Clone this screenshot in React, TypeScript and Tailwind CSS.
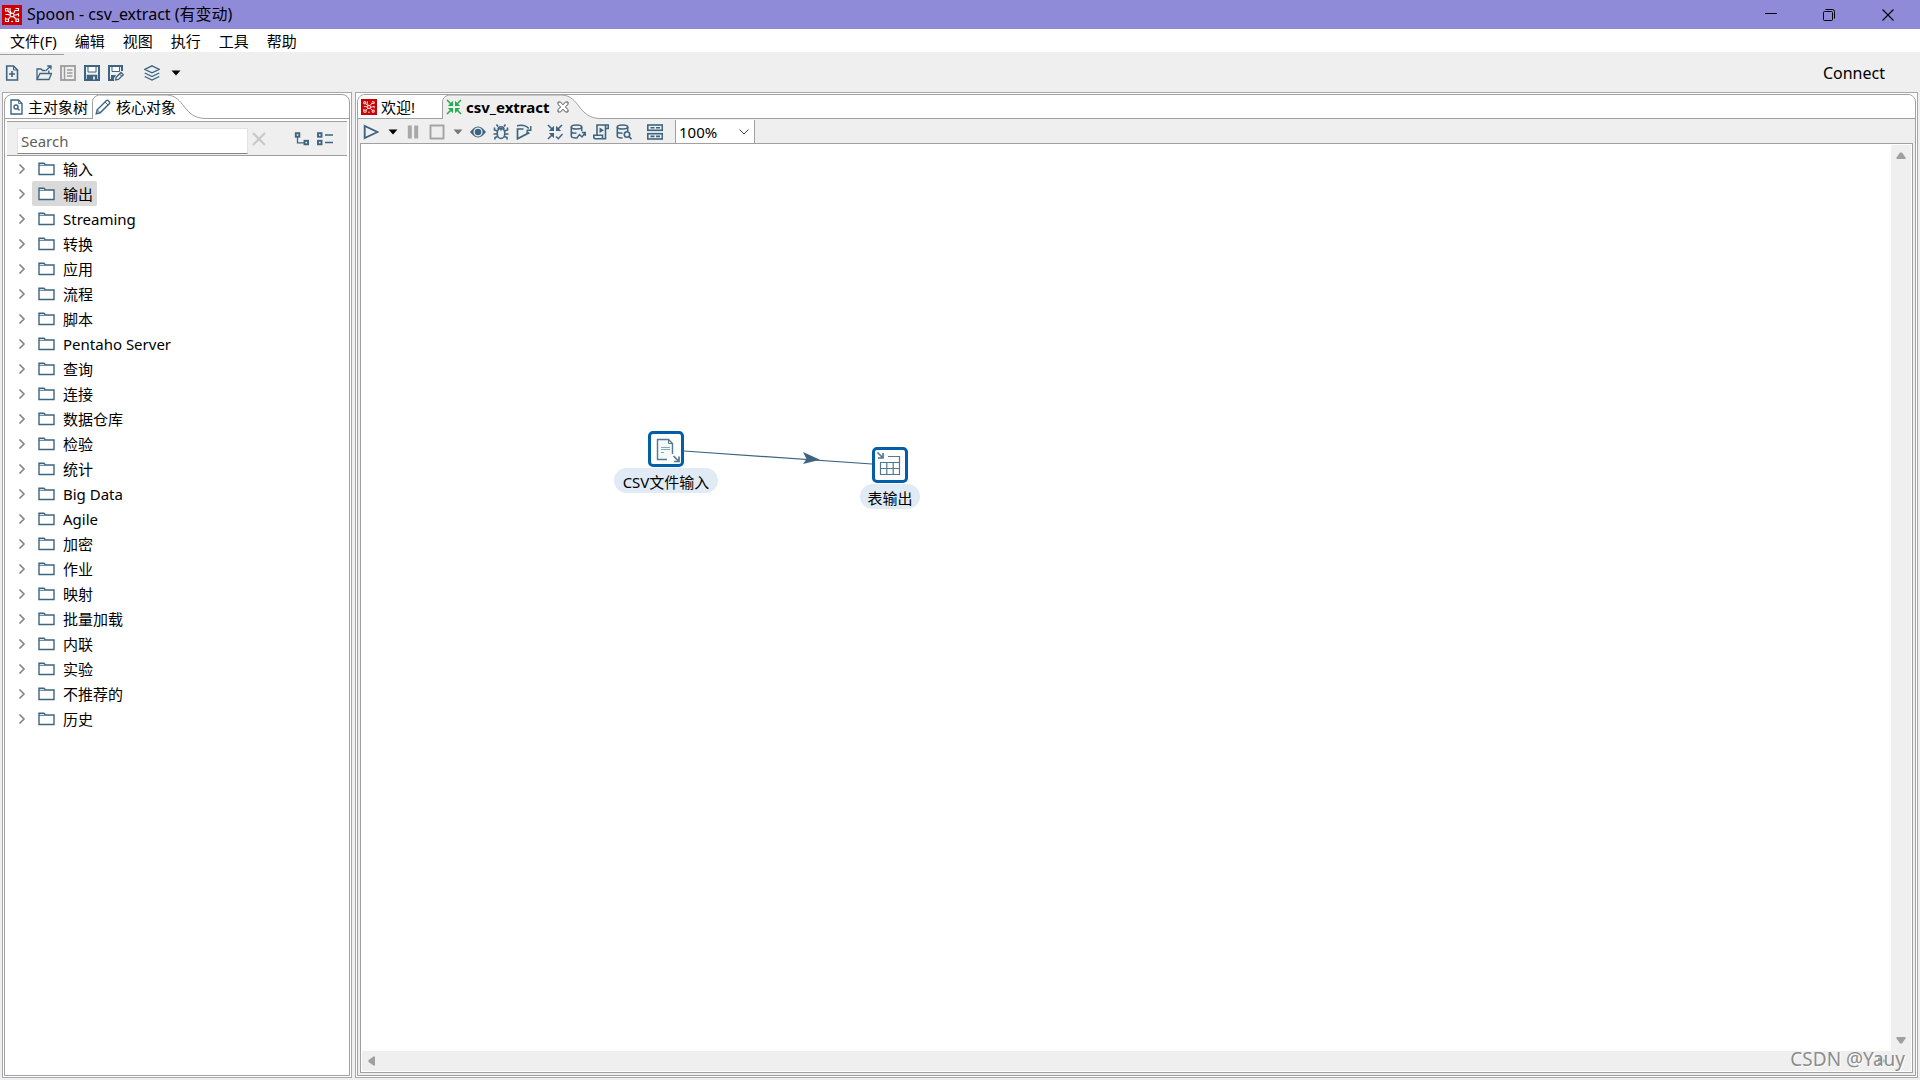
import React, { useState } from 'react';

const BLUE = '#3d6480';
const GRAY = '#9c9c9c';

const FOLDERS = [
  '输入', '输出', 'Streaming', '转换', '应用', '流程', '脚本', 'Pentaho Server',
  '查询', '连接', '数据仓库', '检验', '统计', 'Big Data', 'Agile', '加密',
  '作业', '映射', '批量加载', '内联', '实验', '不推荐的', '历史',
];

const MENUS = ['文件(F)', '编辑', '视图', '执行', '工具', '帮助'];

function Icon({ children, color = BLUE, className = 'size-4' }: { children: React.ReactNode; color?: string; className?: string }) {
  return (
    <svg viewBox="0 0 16 16" fill="none" stroke={color} strokeWidth="1.6" className={`shrink-0 ${className}`} aria-hidden="true">
      {children}
    </svg>
  );
}

function ToolButton({ label, children, className = 'w-4' }: { label: string; children: React.ReactNode; className?: string }) {
  return (
    <button type="button" aria-label={label} className={`flex h-5 shrink-0 items-center justify-center ${className}`}>
      {children}
    </button>
  );
}

function Caret({ color = '#000' }: { color?: string }) {
  return (
    <svg viewBox="0 0 10 6" className="h-[6px] w-[10px] shrink-0" aria-hidden="true">
      <path d="M0.500 0.500H9.500L5 5.500Z" fill={color} />
    </svg>
  );
}

function SpoonLogo({ className }: { className: string }) {
  return (
    <svg viewBox="0 0 20 20" className={`shrink-0 ${className}`} fill="none" stroke="#fff" strokeWidth="1.1" aria-hidden="true">
      <rect width="20" height="20" fill="#cc0000" stroke="none" />
      <path d="M3.500 3.500H6V6H3.500ZM8 3V5.500L9 8M12 8L13 5.500H16.500V3.500H13.500M3.500 9.500H6L8 10M3.500 12.500V16.500H6.500V14H3.500M6.500 14L8.500 11.500M14 14H16.500V16.500H14ZM14 14L11.500 11.500M12 10H14L16.500 9V11.500M6 6L8.500 8.500M9 16.500H11" />
      <circle cx="10" cy="10" r="1.900" />
    </svg>
  );
}

const FileSearchIcon = () => (
  <svg viewBox="0 0 13 16" className="h-4 w-[13px] shrink-0" fill="none" stroke={BLUE} strokeWidth="1.4" aria-hidden="true">
    <path d="M1 1H8.500L12 4.500V15H1Z" />
    <path d="M8.500 1V4.500H12" strokeWidth="0.800" />
    <circle cx="6" cy="8" r="2" />
    <path d="M7.500 9.500L9.500 11.500" />
  </svg>
);

const PencilIcon = () => (
  <Icon>
    <path d="M1.200 14.800L2.200 10.800L11.500 1.500Q12.300 0.900 13.100 1.600L14.400 2.900Q15.100 3.700 14.500 4.500L5.200 13.800Z" strokeWidth="1.400" />
    <path d="M2.200 10.800L5.200 13.800M10 3L13 6" strokeWidth="1" />
  </Icon>
);

const FolderIcon = () => (
  <svg viewBox="0 0 17 14" className="h-[14px] w-[17px] shrink-0" fill="#fff" stroke={BLUE} aria-hidden="true">
    <path d="M1 12.500V1.200H6L7.500 3H16V12.500Z" strokeWidth="1.400" />
    <path d="M1 3.300H7" strokeWidth="0.900" />
  </svg>
);

const ArrowsIn = ({ color = BLUE, withCheck = false }: { color?: string; withCheck?: boolean }) => (
  <>
    <path d="M1 1L5 5M15 1L11 5M1 15L5 11" />
    <path d="M7 1.800V7H1.800ZM9 1.800V7H14.200ZM7 14.200V9H1.800Z" fill={color} stroke="none" />
    {!withCheck && <path d="M15 15L11 11" />}
    {!withCheck && <path d="M9 14.200V9H14.200Z" fill={color} stroke="none" />}
    {withCheck && <path d="M9 12.500L11.300 14.800L15.500 10" strokeWidth="1.400" />}
  </>
);

const DbPath = () => (
  <>
    <ellipse cx="6.500" cy="3" rx="5.200" ry="2" />
    <path d="M1.300 3V12Q1.300 14 6.500 14M11.700 3V7M1.300 7.500Q1.300 9.200 6.500 9.200" />
  </>
);

function TabShape({ fill, curveStart, width }: { fill: string; curveStart: number; width: number }) {
  const c = curveStart;
  const d = `M0.500 24V6.500Q0.500 2 6.500 0H${c}C${c + 18} 1 ${c + 16} 23 ${c + 38} 23.500`;
  return (
    <svg viewBox={`0 0 ${width} 24`} className="absolute inset-0 size-full" preserveAspectRatio="none" fill="none" aria-hidden="true">
      <path d={`${d}V24H0Z`} fill={fill} />
      <path d={d} stroke="#a0a0a0" />
    </svg>
  );
}

function TitleBar() {
  return (
    <header className="flex h-[29px] shrink-0 items-center bg-[#8f8bd8] pr-[2px] pl-[2px]">
      <SpoonLogo className="size-5" />
      <h1 className="ml-[5px] flex-1 pb-[2px] text-[16px] leading-5">Spoon - csv_extract (有变动)</h1>
      <button type="button" aria-label="最小化" className="flex h-full w-[58px] items-center justify-center">
        <svg viewBox="0 0 12 12" className="size-3" stroke="#000"><path d="M0 4.500H12" /></svg>
      </button>
      <button type="button" aria-label="还原" className="flex h-full w-[58px] items-center justify-center">
        <svg viewBox="0 0 12 12" className="size-3" fill="none" stroke="#000">
          <rect x="0.500" y="2.500" width="9" height="9" rx="1" />
          <path d="M2.500 0.500H9.500Q11.500 0.500 11.500 2.500V9.500" />
        </svg>
      </button>
      <button type="button" aria-label="关闭" className="flex h-full w-[60px] items-center justify-center">
        <svg viewBox="0 0 12 12" className="size-3" stroke="#000" strokeWidth="1.100"><path d="M0.500 0.500L11.500 11.500M11.500 0.500L0.500 11.500" /></svg>
      </button>
    </header>
  );
}

function MenuBar() {
  return (
    <nav className="flex h-[23px] shrink-0 items-center gap-[18px] bg-white pl-[10px]">
      {MENUS.map((m) => (
        <button key={m} type="button" className="text-[15px] leading-[22px]">{m}</button>
      ))}
    </nav>
  );
}

function MainToolbar() {
  return (
    <div role="toolbar" className="flex h-10 shrink-0 items-center pt-[2px] pr-[35px] pl-[4px]">
      <ToolButton label="新建">
        <Icon><path d="M2.700 1H9.500L13.500 5V15H2.700Z" /><path d="M9.500 1V5H13.500" strokeWidth="1" /><path d="M8 6V12M5 9H11" /></Icon>
      </ToolButton>
      <div className="ml-4 flex gap-2">
        <ToolButton label="打开">
          <Icon><path d="M1 14.500V4H5L6.500 5.500H9M1 14.500L4 8.500H15.500L13 14.500ZM12.800 8V5.500M9.500 6L14.500 1.200M11.200 1H15V4.500" strokeWidth="1.300" /></Icon>
        </ToolButton>
        <ToolButton label="浏览">
          <Icon color={GRAY}><rect x="1" y="1" width="14" height="14" strokeWidth="1.800" /><path d="M4.500 1V15" strokeWidth="1.500" /><path d="M7 5H12.500M7 8H12.500M7 11H12.500" /></Icon>
        </ToolButton>
        <ToolButton label="保存">
          <Icon><path d="M1 1H15V15H1Z" strokeWidth="2" /><path d="M4 1.500H12V7H4Z" fill="#fff" strokeWidth="1" /><path d="M3.500 10.500H12.500V15H3.500Z" fill={BLUE} /><path d="M10 11.500V14.500" stroke="#fff" /></Icon>
        </ToolButton>
        <ToolButton label="另存为">
          <Icon><path d="M6 15H1V1H14V6" strokeWidth="2" /><path d="M4 1.500H11.500V6.500H4Z" fill="#fff" strokeWidth="1" /><path d="M3 10H8L5 15H3Z" fill={BLUE} stroke="none" /><path d="M7.500 15L8.200 12.200L13 7.500L15.300 9.800L10.400 14.500Z" fill="#efefef" strokeWidth="1.300" /><path d="M11.500 9L14 11.300" strokeWidth="1" /></Icon>
        </ToolButton>
      </div>
      <div className="ml-5 flex items-center gap-[11px]">
        <ToolButton label="透视图">
          <Icon><path d="M8 0.800L15.300 4.300L8 7.800L0.700 4.300ZM0.700 8L8 11.500L15.300 8M0.700 11.500L8 15L15.300 11.500" strokeWidth="1.300" /></Icon>
        </ToolButton>
        <ToolButton label="选择透视图" className="w-[10px]"><Caret /></ToolButton>
      </div>
      <button type="button" className="ml-auto text-[16px] leading-6">Connect</button>
    </div>
  );
}

function Explorer() {
  const [selected, setSelected] = useState('输出');
  return (
    <aside className="flex w-[350px] shrink-0 flex-col border border-[#a8a8ac] bg-white p-px">
      <div className="flex min-h-0 flex-1 flex-col rounded-t-[8px] border border-[#a0a0a0]">
        <div role="tablist" className="flex h-6 shrink-0">
          <button type="button" role="tab" aria-selected="false" className="flex w-[87px] items-center gap-[5px] border-b border-[#a0a0a0] pl-[5px] text-[15px] leading-5 whitespace-nowrap">
            <FileSearchIcon />主对象树
          </button>
          <button type="button" role="tab" aria-selected="true" className="relative flex w-[113px] items-center pb-px pl-[3px] text-[15px] leading-5 whitespace-nowrap">
            <TabShape fill="#fff" curveStart={75} width={113} />
            <span className="relative flex items-center gap-[5px]"><PencilIcon />核心对象</span>
          </button>
          <div className="flex-1 border-b border-[#a0a0a0]" />
        </div>
        <div className="mx-[2px] mt-[2px] flex h-[35px] shrink-0 items-center border-y border-[#a0a0a0] bg-[#efefef] pl-[10px]">
          <input type="text" aria-label="Search" placeholder="Search" className="mt-1 h-[26px] w-[231px] border border-[#e2e2e2] border-b-[#868686] bg-white px-[3px] text-[15px] leading-5 outline-none placeholder:text-[#606060]" />
          <button type="button" aria-label="清除" className="ml-[3px] flex size-4 items-center justify-center">
            <svg viewBox="0 0 14 14" className="size-[14px]" stroke="#c8c8c8" strokeWidth="2"><path d="M1 1L13 13M13 1L1 13" /></svg>
          </button>
          <div className="ml-[27px] flex gap-[7px]">
            <ToolButton label="展开全部">
              <Icon><rect x="1.800" y="2.200" width="3.500" height="3.500" strokeWidth="1.900" /><rect x="10.500" y="9.800" width="3.500" height="3.500" strokeWidth="1.900" /><path d="M3.500 6V11.800H10" strokeWidth="1.300" /></Icon>
            </ToolButton>
            <ToolButton label="收起全部">
              <Icon><rect x="1" y="2.200" width="3.500" height="3.500" strokeWidth="1.900" /><rect x="1" y="9.800" width="3.500" height="3.500" strokeWidth="1.900" /><path d="M8 4H16M8 11.500H16" strokeWidth="1.400" /></Icon>
            </ToolButton>
          </div>
        </div>
        <ul role="tree" className="flex flex-col pl-[12px]">
          {FOLDERS.map((f) => (
            <li key={f} role="treeitem" aria-selected={f === selected} className="flex h-[25px] items-center">
              <svg viewBox="0 0 8 10" className="ml-px h-[10px] w-2 shrink-0" fill="none" stroke="#858585" strokeWidth="1.600" aria-hidden="true"><path d="M1.500 0.500L6 5L1.500 9.500" /></svg>
              <button
                type="button"
                onClick={() => setSelected(f)}
                className={`ml-[6px] flex h-[25px] items-center gap-2 rounded-[2px] pr-1 pl-[6px] text-[15px] leading-6 ${f === selected ? 'bg-[#d9d9d9]' : ''}`}
              >
                <FolderIcon />{f}
              </button>
            </li>
          ))}
        </ul>
      </div>
    </aside>
  );
}

function CanvasToolbar() {
  return (
    <div role="toolbar" className="flex h-6 shrink-0 items-center pt-px pl-[5px]">
      <ToolButton label="运行"><Icon><path d="M1.700 2V14L14.500 8Z" strokeWidth="1.900" /></Icon></ToolButton>
      <ToolButton label="运行选项" className="ml-[9px] w-[10px]"><Caret /></ToolButton>
      <ToolButton label="暂停" className="ml-[7px] w-4"><Icon color="#a8a8a8"><path d="M4.800 1.500V14.500M11.200 1.500V14.500" strokeWidth="4" /></Icon></ToolButton>
      <ToolButton label="停止" className="ml-2 w-4"><Icon color="#a3a3a3"><rect x="1.500" y="1.500" width="13" height="13" strokeWidth="1.900" /></Icon></ToolButton>
      <ToolButton label="停止选项" className="ml-2 w-[10px]"><Caret color="#777" /></ToolButton>
      <div className="ml-[7px] flex gap-[7px]">
        <ToolButton label="预览">
          <Icon><path d="M0.300 8Q8 -2.500 15.700 8Q8 18.500 0.300 8Z" fill={BLUE} strokeWidth="0.500" /><circle cx="8" cy="8" r="3.900" stroke="#efefef" strokeWidth="1.300" /></Icon>
        </ToolButton>
        <ToolButton label="调试">
          <Icon><ellipse cx="8" cy="9.500" rx="3.800" ry="5" /><path d="M5 5.500Q5 2.800 8 2.800T11 5.500M5 2.500L3.500 0.500M11 2.500L12.500 0.500M4.500 7L1.500 6V3.500M11.500 7L14.500 6V3.500M4 10H0.500M12 10H15.500M4.700 12.500L2 13.500V15.500M11.300 12.500L14 13.500V15.500M8 5V6.500" /></Icon>
        </ToolButton>
        <ToolButton label="重放">
          <Icon><path d="M7.500 5H1.500V14.800L12.500 9L10.500 7.500" strokeWidth="1.700" /><path d="M1 1.700Q9 0 12.800 4.500M14.800 2V6.300H10.500" strokeWidth="1.400" /></Icon>
        </ToolButton>
      </div>
      <div className="ml-[15px] flex gap-[7px]">
        <ToolButton label="检验"><Icon><ArrowsIn withCheck /></Icon></ToolButton>
        <ToolButton label="影响分析"><Icon><DbPath /><path d="M6.500 14.500L9.500 10.500L12 13L15 9M11.800 8.500H15.300V12" strokeWidth="1.400" /></Icon></ToolButton>
        <ToolButton label="SQL"><Icon><path d="M4 11V1H15.300V4.500H12.500V14.700H2.500Q0.800 14.700 0.800 13V11.300H9.500V14.500M12.500 1V5" /><path d="M6.500 3.500V9L11 6.300Z" fill={BLUE} stroke="none" /></Icon></ToolButton>
        <ToolButton label="探索数据库"><Icon><DbPath /><circle cx="11" cy="10.500" r="2.700" /><path d="M13 12.500L15.500 15.200" /></Icon></ToolButton>
      </div>
      <ToolButton label="执行结果" className="ml-[15px] w-4">
        <Icon><rect x="0.800" y="1" width="14.500" height="5.300" /><rect x="0.800" y="9.700" width="14.500" height="5.300" /><path d="M3.500 3.700H7.500M9 3.700H13M3.500 12.400H7.500M9 12.400H13" /></Icon>
      </ToolButton>
      <div className="relative ml-3 flex h-full items-center border-x border-x-[#a0a0a0] bg-white">
        <select aria-label="缩放" defaultValue="100%" className="h-[22px] w-[78px] appearance-none bg-transparent pl-[3px] text-[15px] leading-5 outline-none">
          <option>200%</option>
          <option>100%</option>
          <option>50%</option>
        </select>
        <svg viewBox="0 0 10 6" className="pointer-events-none absolute right-[5px] h-[6px] w-[10px]" fill="none" stroke="#444" aria-hidden="true"><path d="M0.500 0.500L5 5L9.500 0.500" /></svg>
      </div>
    </div>
  );
}

function Step({ label, className, children }: { label: string; className: string; children: React.ReactNode }) {
  return (
    <div className={`absolute flex flex-col items-center gap-px ${className}`}>
      <div className="flex size-9 items-center justify-center rounded-[5px] border-[3px] border-[#005fa8] bg-white">
        <svg viewBox="0 0 30 30" className="size-[30px]" fill="none" stroke="#54788f" aria-hidden="true">{children}</svg>
      </div>
      <div className="flex h-[25px] w-full justify-center rounded-full bg-[#e1ebf5] pt-[2px] text-[15px] leading-6 whitespace-nowrap">{label}</div>
    </div>
  );
}

function Canvas() {
  return (
    <div className="mr-[2px] mb-[2px] ml-[2px] flex min-h-0 flex-1 flex-col border border-[#a0a0a0] bg-white p-px">
      <div className="flex min-h-0 flex-1">
        <main className="relative min-w-0 flex-1 overflow-hidden">
          <svg className="absolute top-[300px] left-[320px] h-[30px] w-[192px]" viewBox="0 0 192 30" aria-hidden="true">
            <path d="M2 6L190 19" stroke={BLUE} strokeWidth="1.200" />
            <path d="M121 7L138 14.700L121 19L124.500 14Z" fill={BLUE} />
          </svg>
          <Step label="CSV文件输入" className="top-[286px] left-[252px] w-[104px]">
            <path d="M16 25.500H6.500V5.500H17.500L21.500 9.500V20" fill="#f4f9fc" strokeWidth="1.400" />
            <path d="M17.500 5.500V9.500H21.500" />
            <path d="M10 13.500H19M10 15.500H19M10 18.500H13" stroke="#8ba5b5" />
            <path d="M22.500 22L27.500 27M28 22.500V27.500H23" strokeWidth="1.700" />
          </Step>
          <Step label="表输出" className="top-[302px] left-[498px] w-[60px]">
            <path d="M13 6.500H24.500V24.500H5.500V12.500H24.500M5.500 18.500H24.500M11.800 12.500V24.500M18.200 12.500V24.500" strokeWidth="1.200" />
            <path d="M2.500 2.500L7.500 7.500M8 3V8H3" strokeWidth="1.700" />
          </Step>
        </main>
        <div className="flex w-5 shrink-0 flex-col items-center justify-between bg-[#efefef] py-[7px]">
          <button type="button" aria-label="向上滚动"><svg viewBox="0 0 10 7" className="h-[7px] w-[10px]"><path d="M0.500 7V5.500L4 0.500H6L9.500 5.500V7Z" fill="#9f9f9f" /></svg></button>
          <button type="button" aria-label="向下滚动"><svg viewBox="0 0 10 7" className="h-[7px] w-[10px]"><path d="M0.500 0V1.500L4 6.500H6L9.500 1.500V0Z" fill="#9f9f9f" /></svg></button>
        </div>
      </div>
      <div className="flex h-5 shrink-0 items-center justify-between bg-[#efefef] pr-[26px] pl-[6px]">
        <button type="button" aria-label="向左滚动"><svg viewBox="0 0 7 10" className="h-[10px] w-[7px]"><path d="M7 0.500H5.500L0.500 4V6L5.500 9.500H7Z" fill="#9f9f9f" /></svg></button>
        <button type="button" aria-label="向右滚动"><svg viewBox="0 0 7 10" className="h-[10px] w-[7px]"><path d="M0 0.500H1.500L6.500 4V6L1.500 9.500H0Z" fill="#9f9f9f" /></svg></button>
      </div>
    </div>
  );
}

function Editor() {
  return (
    <section className="flex min-w-0 flex-1 flex-col border border-[#a8a8ac] bg-white p-px">
      <div className="flex min-h-0 flex-1 flex-col overflow-hidden rounded-t-[8px] border border-[#a0a0a0] bg-[#efefef]">
        <div role="tablist" className="flex h-6 shrink-0 bg-white">
          <button type="button" role="tab" aria-selected="false" className="flex w-[84px] items-center gap-1 border-b border-[#a0a0a0] pl-[3px] text-[15px] leading-5 whitespace-nowrap">
            <SpoonLogo className="size-4" />欢迎!
          </button>
          <div role="tab" aria-selected="true" className="relative flex w-[158px] items-center pb-px pl-1">
            <TabShape fill="#efefef" curveStart={120} width={158} />
            <span className="relative flex items-center text-[15px] leading-5 font-bold whitespace-nowrap">
              <Icon color="#22b04c"><ArrowsIn color="#22b04c" /></Icon>
              <span className="ml-1">csv_extract</span>
              <button type="button" aria-label="关闭标签" className="ml-2">
                <svg viewBox="0 0 12 12" className="size-3" fill="#fff" stroke="#555"><path d="M1 1H3.500L6 3.800L8.500 1H11V3.500L8.300 6L11 8.500V11H8.500L6 8.200L3.500 11H1V8.500L3.700 6L1 3.500Z" /></svg>
              </button>
            </span>
          </div>
          <div className="flex-1 border-b border-[#a0a0a0]" />
        </div>
        <CanvasToolbar />
        <Canvas />
      </div>
    </section>
  );
}

export default function App() {
  return (
    <div className="relative flex h-screen flex-col overflow-hidden bg-[#efefef] font-['Noto_Sans','Noto_Sans_CJK_SC',sans-serif] text-black">
      <TitleBar />
      <MenuBar />
      <div className="relative flex shrink-0 flex-col">
        <MainToolbar />
        <div className="absolute top-[2px] left-0 h-px w-16 bg-[#a0a0a0]" />
      </div>
      <div className="flex min-h-0 flex-1 gap-[3px] pr-[2px] pb-[2px] pl-[2px]">
        <Explorer />
        <Editor />
      </div>
      <div className="pointer-events-none absolute right-[15px] bottom-[7px] text-[19px] leading-7 text-[#8c8c8c] [text-shadow:1px_1px_0_#fff]">CSDN @Yauy</div>
    </div>
  );
}
